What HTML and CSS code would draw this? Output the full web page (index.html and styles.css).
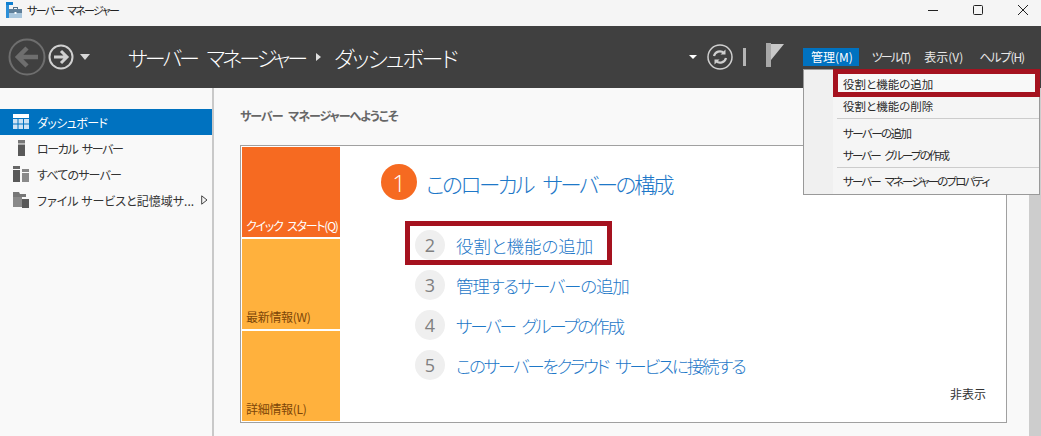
FILE: index.html
```html
<!DOCTYPE html>
<html lang="ja">
<head>
<meta charset="utf-8">
<title>サーバー マネージャー</title>
<link rel="stylesheet" href="styles.css">
</head>
<body>
<div class="window">
  <header class="titlebar">
    <svg class="app-icon" width="16" height="16" viewBox="0 0 16 16"><rect x="0" y="0" width="7" height="3" fill="#0f7fd0"/><rect x="0" y="3" width="3" height="13" fill="#2b8fd8"/><path d="M3 7h13v9H3z" fill="#a9c6dc"/><path d="M7 7V5h5v2h-1V6H8v1z" fill="#54738c"/><path d="M3 7h13v4H3z" fill="#5f7f99"/><rect x="8.500" y="10" width="2" height="2" fill="#fff"/></svg>
    <span class="title-text">サーバー マネージャー</span>
    <div class="win-controls">
      <svg width="12" height="12" viewBox="0 0 12 12"><path d="M1 6.500h10" stroke="#222" fill="none"/></svg>
      <svg width="12" height="12" viewBox="0 0 12 12"><rect x="1.500" y="1.500" width="9" height="9" rx="1" stroke="#222" fill="none"/></svg>
      <svg width="12" height="12" viewBox="0 0 12 12"><path d="M1 1l10 10M11 1L1 11" stroke="#222" fill="none"/></svg>
    </div>
  </header>

  <nav class="toolbar">
    <svg class="nav-back" width="38" height="38" viewBox="0 0 38 38"><circle cx="19" cy="19" r="17.500" fill="none" stroke="#6e6e6e" stroke-width="2"/><path d="M10 19h20M19 10l-9 9 9 9" fill="none" stroke="#6e6e6e" stroke-width="4.500"/></svg>
    <svg class="nav-fwd" width="26" height="26" viewBox="0 0 26 26"><circle cx="13" cy="13" r="11.500" fill="none" stroke="#d0d0d0" stroke-width="2"/><path d="M6 13h13M13 7l6 6-6 6" fill="none" stroke="#d0d0d0" stroke-width="3"/></svg>
    <span class="caret nav-caret"></span>
    <div class="breadcrumb">
      <span class="crumb-root">サーバー マネージャー</span>
      <span class="crumb-arrow"></span>
      <span class="crumb-page">ダッシュボード</span>
    </div>
    <span class="caret small-caret"></span>
    <svg class="refresh" width="26" height="26" viewBox="0 0 26 26"><circle cx="13" cy="13" r="12" fill="none" stroke="#cfcfcf" stroke-width="1.500"/><path d="M7 12a6 6 0 0 1 10-3M19 14a6 6 0 0 1-10 3" fill="none" stroke="#cfcfcf" stroke-width="2.200"/><path d="M18.500 5.500v5h-5zM7.500 20.500v-5h5z" fill="#cfcfcf"/></svg>
    <span class="tool-sep"></span>
    <svg class="flag" width="18" height="24" viewBox="0 0 18 24"><rect x="0" y="0" width="5" height="24" fill="#a8a8a8"/><path d="M5 1h13L5 17z" fill="#c8c8c8"/></svg>
    <ul class="menubar">
      <li class="menu-active">管理(M)</li>
      <li class="menu-tools">ツール(T)</li>
      <li>表示(V)</li>
      <li class="menu-help">ヘルプ(H)</li>
    </ul>
  </nav>

  <div class="content">
    <aside class="sidebar">
      <div class="side-item side-selected">
        <svg width="16" height="16" viewBox="0 0 16 16"><rect width="16" height="4" fill="#fff"/><path d="M0 5h4.500v4.500H0zM5.500 5H10v4.500H5.500zM11 5h5v4.500h-5zM0 10.500h4.500V15H0zM5.500 10.500H10V15H5.500zM11 10.500h5V15h-5z" fill="#cfe2f3"/></svg>
        <span class="side-tight-a">ダッシュボード</span>
      </div>
      <div class="side-item">
        <svg width="16" height="16" viewBox="0 0 16 16"><rect x="5" y="0" width="7" height="3.500" fill="#777"/><rect x="5" y="4.500" width="7" height="11.500" fill="#595959"/></svg>
        <span class="side-tight-b">ローカル サーバー</span>
      </div>
      <div class="side-item">
        <svg width="16" height="16" viewBox="0 0 16 16"><rect x="0" y="0" width="7" height="3" fill="#666"/><rect x="0" y="4" width="7" height="12" fill="#595959"/><rect x="9" y="3" width="7" height="3" fill="#888"/><rect x="9" y="7" width="7" height="9" fill="#8a8a8a"/></svg>
        <span class="side-tight-c">すべてのサーバー</span>
      </div>
      <div class="side-item">
        <svg width="16" height="16" viewBox="0 0 16 16"><path d="M0 0h6l1 2h6v3H0z" fill="#777"/><rect x="0" y="5" width="9" height="10" fill="#8a8a8a"/><rect x="9" y="7" width="7" height="9" fill="#595959"/></svg>
        <span class="side-label-long">ファイル サービスと記憶域サ...</span>
        <svg class="side-arrow" width="7" height="10" viewBox="0 0 7 10"><path d="M.700.800L6 5 .700 9.200z" fill="#f5f5f5" stroke="#444"/></svg>
      </div>
    </aside>

    <main class="main">
      <h1 class="welcome">サーバー マネージャーへようこそ</h1>
      <section class="card">
        <div class="tiles">
          <div class="tile tile-start">クイック スタート(Q)</div>
          <div class="tile tile-news">最新情報(W)</div>
          <div class="tile tile-news">詳細情報(L)</div>
        </div>
        <div class="steps">
          <div class="step-main">
            <span class="badge-main">1</span>
            <span class="step-main-text">このローカル サーバーの構成</span>
          </div>
          <div class="step step-marked"><span class="num">2</span><span>役割と機能の追加</span></div>
          <div class="step"><span class="num">3</span><span class="tight-s">管理するサーバーの追加</span></div>
          <div class="step"><span class="num">4</span><span class="tight-m">サーバー グループの作成</span></div>
          <div class="step"><span class="num">5</span><span class="tight-l">このサーバーをクラウド サービスに接続する</span></div>
          <div class="hide-link">非表示</div>
        </div>
      </section>
    </main>
    <div class="scrollbar"></div>
  </div>

  <div class="dropdown">
    <div class="drop-item drop-marked">役割と機能の追加</div>
    <div class="drop-item">役割と機能の削除</div>
    <div class="drop-sep"></div>
    <div class="drop-item drop-kana">サーバーの追加</div>
    <div class="drop-item drop-spaced">サーバー グループの作成</div>
    <div class="drop-sep drop-sep-last"></div>
    <div class="drop-item drop-spaced">サーバー マネージャーのプロパティ</div>
  </div>
</div>
</body>
</html>
```

FILE: styles.css
```css
*, *::after { box-sizing: border-box; }
html, body { margin: 0; padding: 0; }
body {
  width: 1041px;
  height: 436px;
  overflow: hidden;
  font-family: "Noto Sans CJK JP", "Open Sans", sans-serif;
  font-feature-settings: "palt";
  font-size: 12px;
  color: #222;
  background: #f9f9f9;
}
.window { position: relative; width: 1041px; height: 436px; display: flex; flex-direction: column; }

.titlebar { height: 26px; background: #f5f5f5; display: flex; align-items: center; padding: 0 0 6px 6px; flex: none; }
.app-icon { margin-right: 5px; }
.title-text { font-size: 11px; letter-spacing: -1.65px; word-spacing: 3.500px; color: #222; }
.win-controls { margin-left: auto; display: flex; gap: 33px; padding-right: 12px; }

.toolbar { height: 62px; background: #404040; display: flex; align-items: center; flex: none; padding-left: 8px; color: #fff; }
.nav-back { margin-right: 2px; }
.nav-caret { margin: 0 0 0 6px; }
.caret { width: 0; height: 0; border-left: 5px solid transparent; border-right: 5px solid transparent; border-top: 6px solid #d8d8d8; }
.breadcrumb { margin-left: 38px; font-size: 22px; font-weight: 300; display: flex; align-items: center; gap: 11px; }
.crumb-root { font-size: 21px; letter-spacing: -3px; word-spacing: 8px; }
.crumb-page { letter-spacing: -2px; margin-left: 2px; }
.crumb-arrow { width: 0; height: 0; border-top: 4px solid transparent; border-bottom: 4px solid transparent; border-left: 5px solid #e0e0e0; }
.small-caret { margin-left: auto; border-left-width: 4px; border-right-width: 4px; border-top-width: 4px; border-top-color: #fff; }
.refresh { margin-left: 10px; }
.tool-sep { width: 3px; height: 18px; background: #b5b5b5; margin-left: 10px; }
.flag { margin: 0 0 4px 20px; }
.menubar { list-style: none; display: flex; margin: 0 0 0 19px; padding: 0 10px 0 0; align-items: center; gap: 1px; font-size: 12px; }
.menubar li { height: 18px; line-height: 18px; padding: 0 7px; color: #e8e8e8; white-space: nowrap; }
.menubar .menu-active { background: #0072c0; color: #fff; padding: 0 6px 0 8px; margin-right: 5px; }
.menubar .menu-tools { letter-spacing: -2px; }
.menubar .menu-help { letter-spacing: -1.1px; margin-left: 1px; }

.content { flex: 1; display: flex; min-height: 0; }
.sidebar { width: 214px; flex: none; border-right: 2px solid #c9c9c9; padding-top: 21px; background: #f9f9f9; }
.side-item { height: 26px; display: flex; align-items: center; padding-left: 13px; gap: 8px; color: #333; white-space: nowrap; }
.side-selected { background: #0072c0; color: #fff; }
.side-tight-a { letter-spacing: -0.6px; }
.side-tight-b { letter-spacing: -1.350px; word-spacing: 3px; }
.side-tight-c { letter-spacing: -0.8px; }
.side-label-long { margin-right: -1px; }

.main { flex: 1; padding: 19px 22px 0 26px; min-width: 0; }
.welcome { margin: 0 0 20px; font-size: 12px; line-height: 18px; font-weight: 700; letter-spacing: -1px; word-spacing: 4px; color: #666; }
.card { height: 278px; border: 1px solid #a0a0a0; background: #fff; display: flex; padding: 1px; }
.tiles { width: 98px; display: flex; flex-direction: column; gap: 2px; flex: none; }
.tile { height: 90px; display: flex; align-items: flex-end; padding: 0 0 4px 4px; font-size: 12px; line-height: 16px; white-space: nowrap; }
.tile-start { background: #f66a21; color: #fff; padding-bottom: 3px; letter-spacing: -1.25px; word-spacing: 3px; }
.tile-news { background: #ffb13d; color: #7d4608; letter-spacing: -0.3px; }

.steps { flex: 1; display: flex; flex-direction: column; position: relative; }
.step-main { display: flex; align-items: center; gap: 9px; height: 36px; margin: 17px 0 0 41px; font-size: 21.500px; font-weight: 300; color: #1e78c8; }
.step-main-text { letter-spacing: -2.4px; word-spacing: 7px; padding-top: 2px; }
.badge-main { width: 36px; height: 36px; border-radius: 50%; background: #f66a21; color: #fff; display: flex; align-items: center; justify-content: center; font-family: "Open Sans", sans-serif; font-weight: 300; font-size: 24px; flex: none; }
.step { display: flex; align-items: center; gap: 11px; height: 30px; margin: 10px 0 0 75px; font-size: 17.500px; font-weight: 300; color: #1e78c8; }
.step-marked { margin-top: 30px; position: relative; }
.step-marked::after { content: ""; position: absolute; left: -10px; top: -9px; width: 207px; height: 44px; border: 5px solid #a5121f; }
.tight-s { letter-spacing: -1.2px; }
.tight-m { letter-spacing: -2.15px; word-spacing: 5px; }
.tight-l { letter-spacing: -2.15px; word-spacing: 5px; }
.num { width: 30px; height: 30px; border-radius: 50%; background: #efefef; color: #808080; display: flex; align-items: center; justify-content: center; font-family: "Open Sans", sans-serif; font-size: 18px; font-weight: 400; flex: none; }
.hide-link { position: absolute; right: 19px; bottom: 19px; font-size: 12px; color: #333; }

.scrollbar { width: 12px; flex: none; background: #cdcdcd; }

.dropdown { position: absolute; left: 803px; top: 69px; width: 237px; height: 126px; background: linear-gradient(to right, #f0f0f0 29px, #f5f5f5 29px); border: 1px solid #999; padding: 3px 0 0 29px; z-index: 5; }
.drop-item { height: 22px; line-height: 22px; padding-left: 10px; font-size: 11.500px; color: #2a2a2a; white-space: nowrap; }
.drop-kana { letter-spacing: -1.55px; }
.drop-spaced { letter-spacing: -1.85px; word-spacing: 4px; }
.drop-sep { height: 1px; background: #ccc; margin: 1px 0 3px 4px; }
.drop-sep-last { margin: 1px 0 2px 4px; }
.drop-marked { position: relative; background: #f8f8f8; }
.drop-marked::after { content: ""; position: absolute; left: 0; top: -4px; width: 207px; height: 28px; border: 5px solid #a5121f; }
```
